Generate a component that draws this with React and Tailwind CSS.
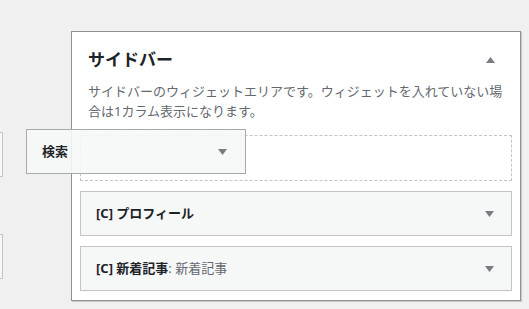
export default function App() {
  const font = { fontFamily: '"Noto Sans", "Noto Sans CJK JP", sans-serif' };
  const Down = () => (
    <svg width="9" height="6" viewBox="0 0 9 6" className="shrink-0">
      <path d="M0 0 L9 0 L4.5 6 Z" fill="#787c82" />
    </svg>
  );
  const Up = () => (
    <svg width="9" height="6" viewBox="0 0 9 6" className="shrink-0">
      <path d="M0 6 L9 6 L4.5 0 Z" fill="#787c82" />
    </svg>
  );
  return (
    <div className="relative w-[529px] h-[309px] bg-[#f0f0f1] overflow-hidden" style={font}>
      {/* left column fragments */}
      <div className="absolute left-[-20px] top-[132px] w-[23px] h-[45px] bg-[#f6f7f7] border border-[#c3c4c7]" />
      <div className="absolute left-[-20px] top-[234px] w-[23px] h-[45px] bg-[#f6f7f7] border border-[#c3c4c7]" />

      <div className="pl-[71px] pt-[31px]">
        <div className="w-[450px] h-[270px] bg-white border border-[#8c8f94] shadow-[1px_1px_1px_rgba(0,0,0,0.15)] px-2">
          <div className="flex items-center justify-between pl-2 pr-[17px] pt-4">
            <h2 className="text-[17px] leading-6 font-bold text-[#1d2327]">サイドバー</h2>
            <Up />
          </div>
          <p className="pl-2 mt-[10px] text-[13px] leading-[19.5px] text-[#646970] whitespace-nowrap">
            サイドバーのウィジェットエリアです。ウィジェットを入れていない場
            <br />
            合は1カラム表示になります。
          </p>
          <div className="mt-[14px] h-[46px] border border-dashed border-[#c3c4c7]" />
          <div className="mt-[10px] h-[45px] bg-[#f6f7f7] border border-[#c3c4c7] flex items-center justify-between pl-[15px] pr-[17px]">
            <span className="text-[13px] font-bold text-[#1d2327]">[C] プロフィール</span>
            <Down />
          </div>
          <div className="mt-[10px] h-[45px] bg-[#f6f7f7] border border-[#c3c4c7] flex items-center justify-between pl-[15px] pr-[17px]">
            <span className="text-[13px] font-bold text-[#1d2327]">
              [C] 新着記事<span className="font-normal text-[#646970]">: 新着記事</span>
            </span>
            <Down />
          </div>
        </div>
      </div>

      {/* dragged widget */}
      <div className="absolute left-[26px] top-[129px] w-[220px] h-[45px] bg-[#f6f7f7]/90 border border-[#a7aaad] flex items-center justify-between pl-[15px] pr-[18px]">
        <span className="text-[13px] font-bold text-[#1d2327]">検索</span>
        <Down />
      </div>
    </div>
  );
}
